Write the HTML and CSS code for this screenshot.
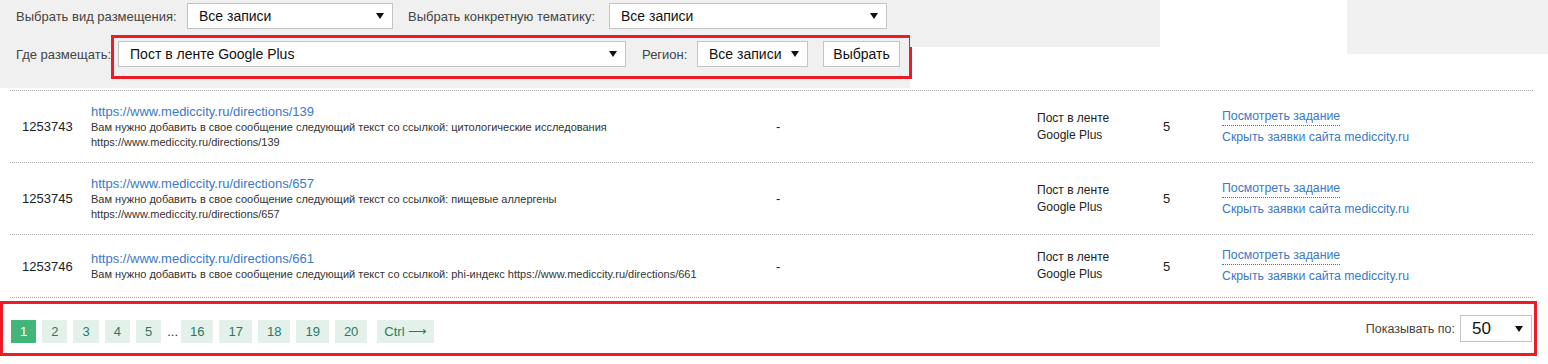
FILE: index.html
```html
<!DOCTYPE html>
<html lang="ru">
<head>
<meta charset="utf-8">
<title>Задания</title>
<link rel="stylesheet" href="styles.css">
</head>
<body>
<div class="top">
  <div class="panel">
    <div class="frow frow1">
      <span class="label">Выбрать вид размещения:</span>
      <div class="fsel sel-kind"><span>Все записи</span><svg class="arr" width="8" height="6" viewBox="0 0 8 6"><polygon points="0,0 8,0 4,6"/></svg></div>
      <span class="label label-theme">Выбрать конкретную тематику:</span>
      <div class="fsel sel-theme"><span>Все записи</span><svg class="arr" width="8" height="6" viewBox="0 0 8 6"><polygon points="0,0 8,0 4,6"/></svg></div>
    </div>
    <div class="frow frow2">
      <span class="label">Где размещать:</span>
      <div class="hl-group">
        <div class="fsel sel-where"><span>Пост в ленте Google Plus</span><svg class="arr" width="8" height="6" viewBox="0 0 8 6"><polygon points="0,0 8,0 4,6"/></svg></div>
        <span class="label label-region">Регион:</span>
        <div class="fsel sel-region"><span>Все записи</span><svg class="arr" width="8" height="6" viewBox="0 0 8 6"><polygon points="0,0 8,0 4,6"/></svg></div>
        <button class="btn">Выбрать</button>
      </div>
    </div>
  </div>
  <div class="panel-ext"></div>
  <div class="side"></div>
</div>

<div class="table">
  <div class="trow">
    <div class="c-id">1253743</div>
    <div class="c-desc">
      <a class="site" href="#">https://www.mediccity.ru/directions/139</a>
      <p class="task">Вам нужно добавить в свое сообщение следующий текст со ссылкой: цитологические исследования<br>https://www.mediccity.ru/directions/139</p>
    </div>
    <div class="c-dash">-</div>
    <div class="c-type">Пост в ленте<br>Google Plus</div>
    <div class="c-num">5</div>
    <div class="c-act"><a class="view" href="#">Посмотреть задание</a><a class="hide" href="#">Скрыть заявки сайта mediccity.ru</a></div>
  </div>
  <div class="trow">
    <div class="c-id">1253745</div>
    <div class="c-desc">
      <a class="site" href="#">https://www.mediccity.ru/directions/657</a>
      <p class="task">Вам нужно добавить в свое сообщение следующий текст со ссылкой: пищевые аллергены<br>https://www.mediccity.ru/directions/657</p>
    </div>
    <div class="c-dash">-</div>
    <div class="c-type">Пост в ленте<br>Google Plus</div>
    <div class="c-num">5</div>
    <div class="c-act"><a class="view" href="#">Посмотреть задание</a><a class="hide" href="#">Скрыть заявки сайта mediccity.ru</a></div>
  </div>
  <div class="trow trow-short">
    <div class="c-id">1253746</div>
    <div class="c-desc">
      <a class="site" href="#">https://www.mediccity.ru/directions/661</a>
      <p class="task">Вам нужно добавить в свое сообщение следующий текст со ссылкой: phi-индекс https://www.mediccity.ru/directions/661</p>
    </div>
    <div class="c-dash">-</div>
    <div class="c-type">Пост в ленте<br>Google Plus</div>
    <div class="c-num">5</div>
    <div class="c-act"><a class="view" href="#">Посмотреть задание</a><a class="hide" href="#">Скрыть заявки сайта mediccity.ru</a></div>
  </div>
</div>

<div class="footer">
  <div class="pager">
    <a class="pg active" href="#">1</a>
    <a class="pg" href="#">2</a>
    <a class="pg" href="#">3</a>
    <a class="pg" href="#">4</a>
    <a class="pg" href="#">5</a>
    <span class="dots">...</span>
    <a class="pg" href="#">16</a>
    <a class="pg" href="#">17</a>
    <a class="pg" href="#">18</a>
    <a class="pg" href="#">19</a>
    <a class="pg" href="#">20</a>
    <a class="pg pg-next" href="#">Ctrl ⟶</a>
  </div>
  <div class="perpage">
    <span class="label">Показывать по:</span>
    <div class="fsel sel-per"><span>50</span><svg class="arr" width="8" height="6" viewBox="0 0 8 6"><polygon points="0,0 8,0 4,6"/></svg></div>
  </div>
</div>
</body>
</html>
```
FILE: styles.css
```css
* { box-sizing: border-box; }
body {
  margin: 0;
  background: #fff;
  font-family: "Liberation Sans", Arial, sans-serif;
  color: #333;
  width: 1548px;
}
a { text-decoration: none; }

.top { display: flex; align-items: flex-start; }
.panel { width: 910px; height: 88px; background: #f0f0f0; }
.panel-ext { width: 250px; height: 47px; background: #f0f0f0; }
.side { width: 201px; height: 54px; background: #f0f0f0; margin-left: auto; }

.frow { display: flex; align-items: center; }
.frow1 { padding: 3px 0 6px 16px; height: 35px; }
.frow2 { padding-left: 16px; align-items: flex-start; }
.frow2 > .label { margin-top: 12px; width: 96px; }

.label { font-size: 13px; color: #444; white-space: nowrap; }
.label-theme { margin-left: 15px; width: 201px; }
.frow1 > .label:first-child { width: 171px; }

.fsel {
  display: flex; align-items: center; justify-content: space-between;
  height: 26px; background: #fff; border: 1px solid #c4c4c4;
  padding: 0 8px 0 11px; font-size: 14px; color: #111;
}
.arr { fill: #111; flex: none; }
.sel-kind { width: 206px; }
.sel-theme { width: 278px; }

.hl-group {
  display: flex; align-items: center;
  border: 3px solid #ed1c24;
  padding: 3px 9px 9px 4px;
}
.sel-where { width: 508px; }
.label-region { margin-left: 16px; width: 55px; }
.sel-region { width: 111px; }
.btn {
  margin-left: 15px; width: 77px; height: 26px; background: #fff;
  border: 1px solid #c4c4c4; font-family: inherit; font-size: 14px; color: #111; padding: 0;
}

.table { margin: 2px 15px 0 10px; border-top: 1px dotted #aaa; }
.trow {
  display: grid;
  grid-template-columns: 81px 685px 261px 126px 59px 1fr;
  align-items: center;
  min-height: 72px;
  border-bottom: 1px dotted #aaa;
  padding: 12px 0;
}
.trow-short { min-height: 59px; }
.c-id { padding-left: 12px; font-size: 13px; color: #222; }
.site { display: block; font-size: 13px; line-height: 17px; color: #3b78c8; }
.task { margin: 0; font-size: 11px; line-height: 15px; color: #333; }
.c-dash { font-size: 13px; color: #222; }
.c-type { font-size: 12px; line-height: 17px; color: #222; }
.c-num { font-size: 13px; color: #222; }
.c-act { display: flex; flex-direction: column; align-items: flex-start; gap: 3px; }
.view, .hide { font-size: 12.3px; line-height: 17px; color: #3b78c8; }
.view { border-bottom: 1px dotted #3b78c8; }

.footer {
  margin-top: 3px; width: 1537px; height: 55px;
  border: 3px solid #ed1c24;
  display: flex; align-items: center; justify-content: space-between;
  padding: 0 2px 0 8px;
}
.pager { display: flex; align-items: center; gap: 6px; margin-top: 6px; }
.pg {
  display: flex; align-items: center; justify-content: center;
  height: 23px; min-width: 25px; padding: 0 9px;
  background: #e3f1ea; color: #2a7a63; font-size: 13px; white-space: nowrap;
}
.pg.active { background: #43b57b; color: #fff; }
.pg-next { margin-left: 4px; padding: 0 7px; }
.dots { font-size: 13px; color: #1a237e; margin: 0 -3px 0 0; }
.perpage { display: flex; align-items: center; gap: 5px; }
.perpage .label { font-size: 12.5px; }
.sel-per { width: 72px; height: 27px; font-size: 17px; }
```
